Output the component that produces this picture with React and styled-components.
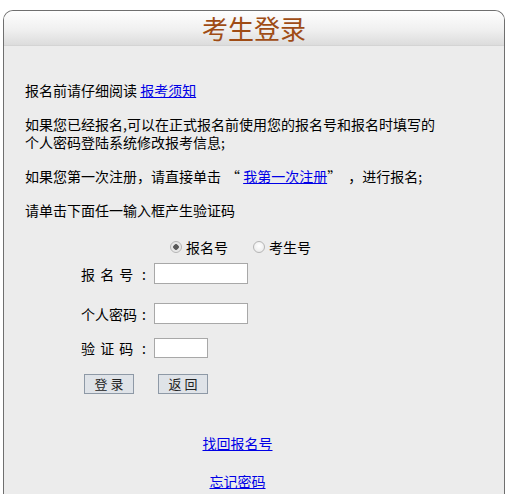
import styled, { createGlobalStyle } from "styled-components";

const GlobalStyle = createGlobalStyle`
  html, body {
    margin: 0;
    padding: 0;
    background: #ffffff;
  }
  body {
    font-family: "Noto Sans CJK SC", "Liberation Sans", sans-serif;
    font-size: 14px;
    color: #000;
  }
`;

const Panel = styled.div`
  margin: 10px 3px 0 3px;
  height: 484px;
  border: 1px solid #6f6f6f;
  border-bottom: none;
  border-radius: 10px 10px 0 0;
  background: #ececec;
  overflow: hidden;
`;

const Header = styled.div`
  height: 34px;
  border-bottom: 1px solid #d4d4d4;
  background: linear-gradient(to bottom, #fefefe 0%, #f0f0f0 55%, #dcdcdc 100%);
  display: flex;
  align-items: center;
  justify-content: center;
`;

const Title = styled.h1`
  margin: 0;
  font-size: 26px;
  font-weight: normal;
  line-height: 34px;
  color: #9f4c15;
`;

const Content = styled.div`
  width: 425px;
  padding: 35px 0 0 21px;
`;

const Para = styled.p`
  margin: 0 0 ${(p) => (p.$last ? 0 : 16)}px;
  line-height: 18px;
  white-space: nowrap;
`;

const Quote = styled.span`
  margin-left: ${(p) => p.$l || 0}px;
  margin-right: ${(p) => p.$r || 0}px;
`;

const Link = styled.a`
  color: #0000e6;
  text-decoration: underline;
  cursor: pointer;
`;

const Form = styled.div`
  padding-left: 56px;
`;

const Row = styled.div`
  display: flex;
  align-items: center;
  height: ${(p) => p.$h}px;
  margin-top: ${(p) => p.$top}px;
`;

const RadioGroup = styled.div`
  display: flex;
  align-items: center;
  padding-left: 89px;
`;

const RadioLabel = styled.label`
  display: flex;
  align-items: center;
  margin-right: 25px;
  line-height: 18px;
`;

const Radio = styled.input.attrs({ type: "radio" })`
  appearance: none;
  width: 12px;
  height: 12px;
  margin: 0 4px 0 0;
  border: 1px solid #b5b5b5;
  border-radius: 50%;
  background: radial-gradient(circle at 50% 40%, #ffffff 0%, #e6e6e6 100%);
  box-sizing: border-box;

  &:checked {
    background: radial-gradient(circle, #5a5a5a 0 2.5px, #e4e4e4 3px, #f2f2f2 100%);
  }
`;

const LabelText = styled.span`
  width: 60px;
  white-space: pre;
  word-spacing: 2px;
`;

const Colon = styled.span`
  width: 12px;
  padding-left: 1px;
`;

const TextInput = styled.input`
  box-sizing: border-box;
  width: ${(p) => p.$w}px;
  height: ${(p) => p.$h}px;
  margin: 0;
  padding: 1px 3px;
  border: 1px solid #a8a8a8;
  background: #fff;
  font: inherit;
`;

const ButtonBar = styled.div`
  display: flex;
  gap: 24px;
  padding-left: 3px;
`;

const Button = styled.button`
  box-sizing: border-box;
  width: 50px;
  height: 20px;
  padding: 0;
  border: 1px solid #8e99a6;
  background: #dfe3e8;
  font-family: inherit;
  font-size: 13px;
  line-height: 18px;
  letter-spacing: 3px;
  text-indent: 3px;
  color: #222;
`;

const LinkRow = styled.div`
  text-align: center;
  line-height: 18px;
  margin-top: ${(p) => p.$top}px;
`;

export default function App() {
  return (
    <>
      <GlobalStyle />
      <Panel>
        <Header>
          <Title>考生登录</Title>
        </Header>
        <Content>
          <Para>
            报名前请仔细阅读 <Link>报考须知</Link>
          </Para>
          <Para>
            如果您已经报名,可以在正式报名前使用您的报名号和报名时填写的
            <br />
            个人密码登陆系统修改报考信息;
          </Para>
          <Para>
            如果您第一次注册，请直接单击<Quote $l={5}>“</Quote> <Link>我第一次注册</Link>
            <Quote $r={14}>”</Quote>，进行报名;
          </Para>
          <Para $last>请单击下面任一输入框产生验证码</Para>

          <Form>
            <Row $h={18} $top={19}>
              <RadioGroup>
                <RadioLabel>
                  <Radio name="kind" defaultChecked />
                  报名号
                </RadioLabel>
                <RadioLabel>
                  <Radio name="kind" />
                  考生号
                </RadioLabel>
              </RadioGroup>
            </Row>
            <Row $h={21} $top={7}>
              <LabelText>报 名 号</LabelText>
              <Colon>:</Colon>
              <TextInput $w={94} $h={21} />
            </Row>
            <Row $h={21} $top={19}>
              <LabelText>个人密码</LabelText>
              <Colon>:</Colon>
              <TextInput type="password" $w={94} $h={21} />
            </Row>
            <Row $h={20} $top={14}>
              <LabelText>验 证 码</LabelText>
              <Colon>:</Colon>
              <TextInput $w={54} $h={20} />
            </Row>
            <Row $h={20} $top={16}>
              <ButtonBar>
                <Button>登录</Button>
                <Button>返回</Button>
              </ButtonBar>
            </Row>
          </Form>

          <LinkRow $top={40}>
            <Link>找回报名号</Link>
          </LinkRow>
          <LinkRow $top={20}>
            <Link>忘记密码</Link>
          </LinkRow>
        </Content>
      </Panel>
    </>
  );
}
